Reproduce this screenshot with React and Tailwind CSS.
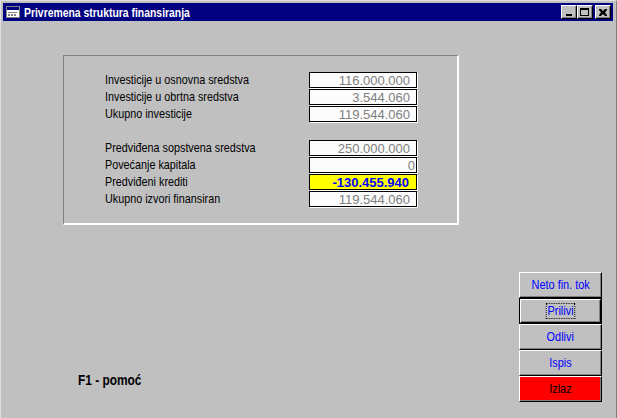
import React from "react";

const sans = { fontFamily: '"Liberation Sans", Arial, sans-serif' };

function Field({ value, variant, tight = false }) {
  if (variant === "yellow") {
    return (
      <div className="h-[16px] w-[108px] border border-black bg-[#ffff00] shadow-[1px_1px_0_#fff] flex items-center justify-end pr-[7px] text-[13px] font-bold text-[#0000ff] leading-none" style={sans}>
        {value}
      </div>
    );
  }
  return (
    <div className={`h-[16px] w-[108px] border border-black bg-[#fcfcfc] shadow-[1px_1px_0_#fff] flex items-center justify-end ${tight ? "pr-[1px]" : "pr-[6px]"} text-[13px] text-[#808080] leading-none`} style={sans}>
      {value}
    </div>
  );
}

function Row({ label, value, variant, tight }) {
  return (
    <div className="flex h-[17px] items-start">
      <div className="w-[204px] text-[13px] leading-[14px] text-black mt-[1px] whitespace-nowrap" style={sans}>
        <span className="inline-block origin-left scale-x-[0.83]">{label}</span>
      </div>
      <Field value={value} variant={variant} tight={tight} />
    </div>
  );
}

function WinButton({ children, className = "", textClass = "text-[#0000ff]", def = false, focus = false }) {
  return (
    <div className={`h-[26px] w-[83px] flex text-[13px] ${textClass} ${def ? "border border-black" : ""}`} style={sans}>
      <div className={`flex-1 flex items-center justify-center border-t border-l border-t-white border-l-white border-b border-r border-b-black border-r-black shadow-[inset_-1px_-1px_0_#808080] ${className}`}>
        {focus ? (
          <span className="inline-block origin-center scale-x-[0.84] px-[1px] outline outline-1 outline-dotted outline-black leading-[14px]">{children}</span>
        ) : (
          <span className="inline-block origin-center scale-x-[0.84] leading-[14px] whitespace-nowrap">{children}</span>
        )}
      </div>
    </div>
  );
}

function CaptionBtn({ children }) {
  return (
    <div className="w-[16px] h-[14px] bg-[#c0c0c0] border-t border-l border-t-white border-l-white border-b border-r border-b-black border-r-black shadow-[inset_-1px_-1px_0_#808080] flex items-center justify-center">
      {children}
    </div>
  );
}

export default function App() {
  return (
    <div className="w-[617px] h-[418px] bg-[#c0c0c0] overflow-hidden">
      <div className="w-[617px] h-[418px] border-t border-l border-t-[#dfdfdf] border-l-[#dfdfdf] border-r border-r-[#808080] pt-[2px] pl-[2px] pr-[3px] flex flex-col">
        {/* Title bar */}
        <div className="h-[18px] bg-[#000080] flex items-center pl-[2px] pr-[2px]">
          <svg width="16" height="16" viewBox="0 0 16 16" className="shrink-0">
            <rect x="1" y="2" width="14" height="12" fill="#c0c0c0" />
            <rect x="1.5" y="2.5" width="13" height="11" fill="none" stroke="#808080" strokeWidth="1" />
            <rect x="2" y="3" width="12" height="3" fill="#000080" />
            <rect x="2" y="6" width="12" height="7" fill="#ffffff" />
            <rect x="3" y="8" width="9" height="1" fill="#808080" />
            <rect x="3" y="10" width="2" height="2" fill="#808080" />
            <rect x="6" y="10" width="2" height="2" fill="#808080" />
            <rect x="9" y="10" width="2" height="2" fill="#808080" />
          </svg>
          <div className="ml-[3px] text-white font-bold text-[13px] leading-none whitespace-nowrap" style={sans}>
            <span className="inline-block origin-left scale-x-[0.8]">Privremena struktura finansiranja</span>
          </div>
          <div className="ml-auto flex items-center">
            <CaptionBtn>
              <div className="w-[6px] h-[2px] bg-black mt-[6px] -ml-[1px]" />
            </CaptionBtn>
            <CaptionBtn>
              <div className="w-[9px] h-[8px] border border-black border-t-2 -ml-[1px]" />
            </CaptionBtn>
            <div className="ml-[2px]">
              <CaptionBtn>
                <svg width="8" height="7" viewBox="0 0 8 7" className="-ml-[1px]">
                  <path d="M0 0h2l2 2 2-2h2v1L6 3.5 8 6v1H6L4 5 2 7H0V6l2-2.5L0 1z" fill="#000" />
                </svg>
              </CaptionBtn>
            </div>
          </div>
        </div>

        {/* Body */}
        <div className="flex-1">
          <div className="flex">
            <div className="ml-[60px] mt-[34px] w-[396px] h-[170px] border-t border-l border-t-[#808080] border-l-[#808080] border-b-2 border-r-2 border-b-white border-r-white pl-[41px] pt-[16px]">
              <Row label="Investicije u osnovna sredstva" value="116.000.000" />
              <Row label="Investicije u obrtna sredstva" value="3.544.060" />
              <Row label="Ukupno investicije" value="119.544.060" />
              <div className="h-[17px]" />
              <Row label="Predviđena sopstvena sredstva" value="250.000.000" />
              <Row label="Povećanje kapitala" value="0" tight />
              <Row label="Predviđeni krediti" value="-130.455.940" variant="yellow" />
              <Row label="Ukupno izvori finansiran" value="119.544.060" />
            </div>
          </div>
          <div className="flex items-end justify-between mt-[47px]">
            <div className="ml-[75px] mb-[15px] font-bold text-[14px] text-black leading-none whitespace-nowrap" style={sans}>
              <span className="inline-block origin-left scale-x-[0.85]">F1 - pomoć</span>
            </div>
            <div className="mr-[11px] flex flex-col">
              <WinButton>Neto fin. tok</WinButton>
              <WinButton def focus>Prilivi</WinButton>
              <WinButton>Odlivi</WinButton>
              <WinButton>Ispis</WinButton>
              <WinButton className="bg-[#ff0000]" textClass="text-black">Izlaz</WinButton>
            </div>
          </div>
        </div>
      </div>
    </div>
  );
}
